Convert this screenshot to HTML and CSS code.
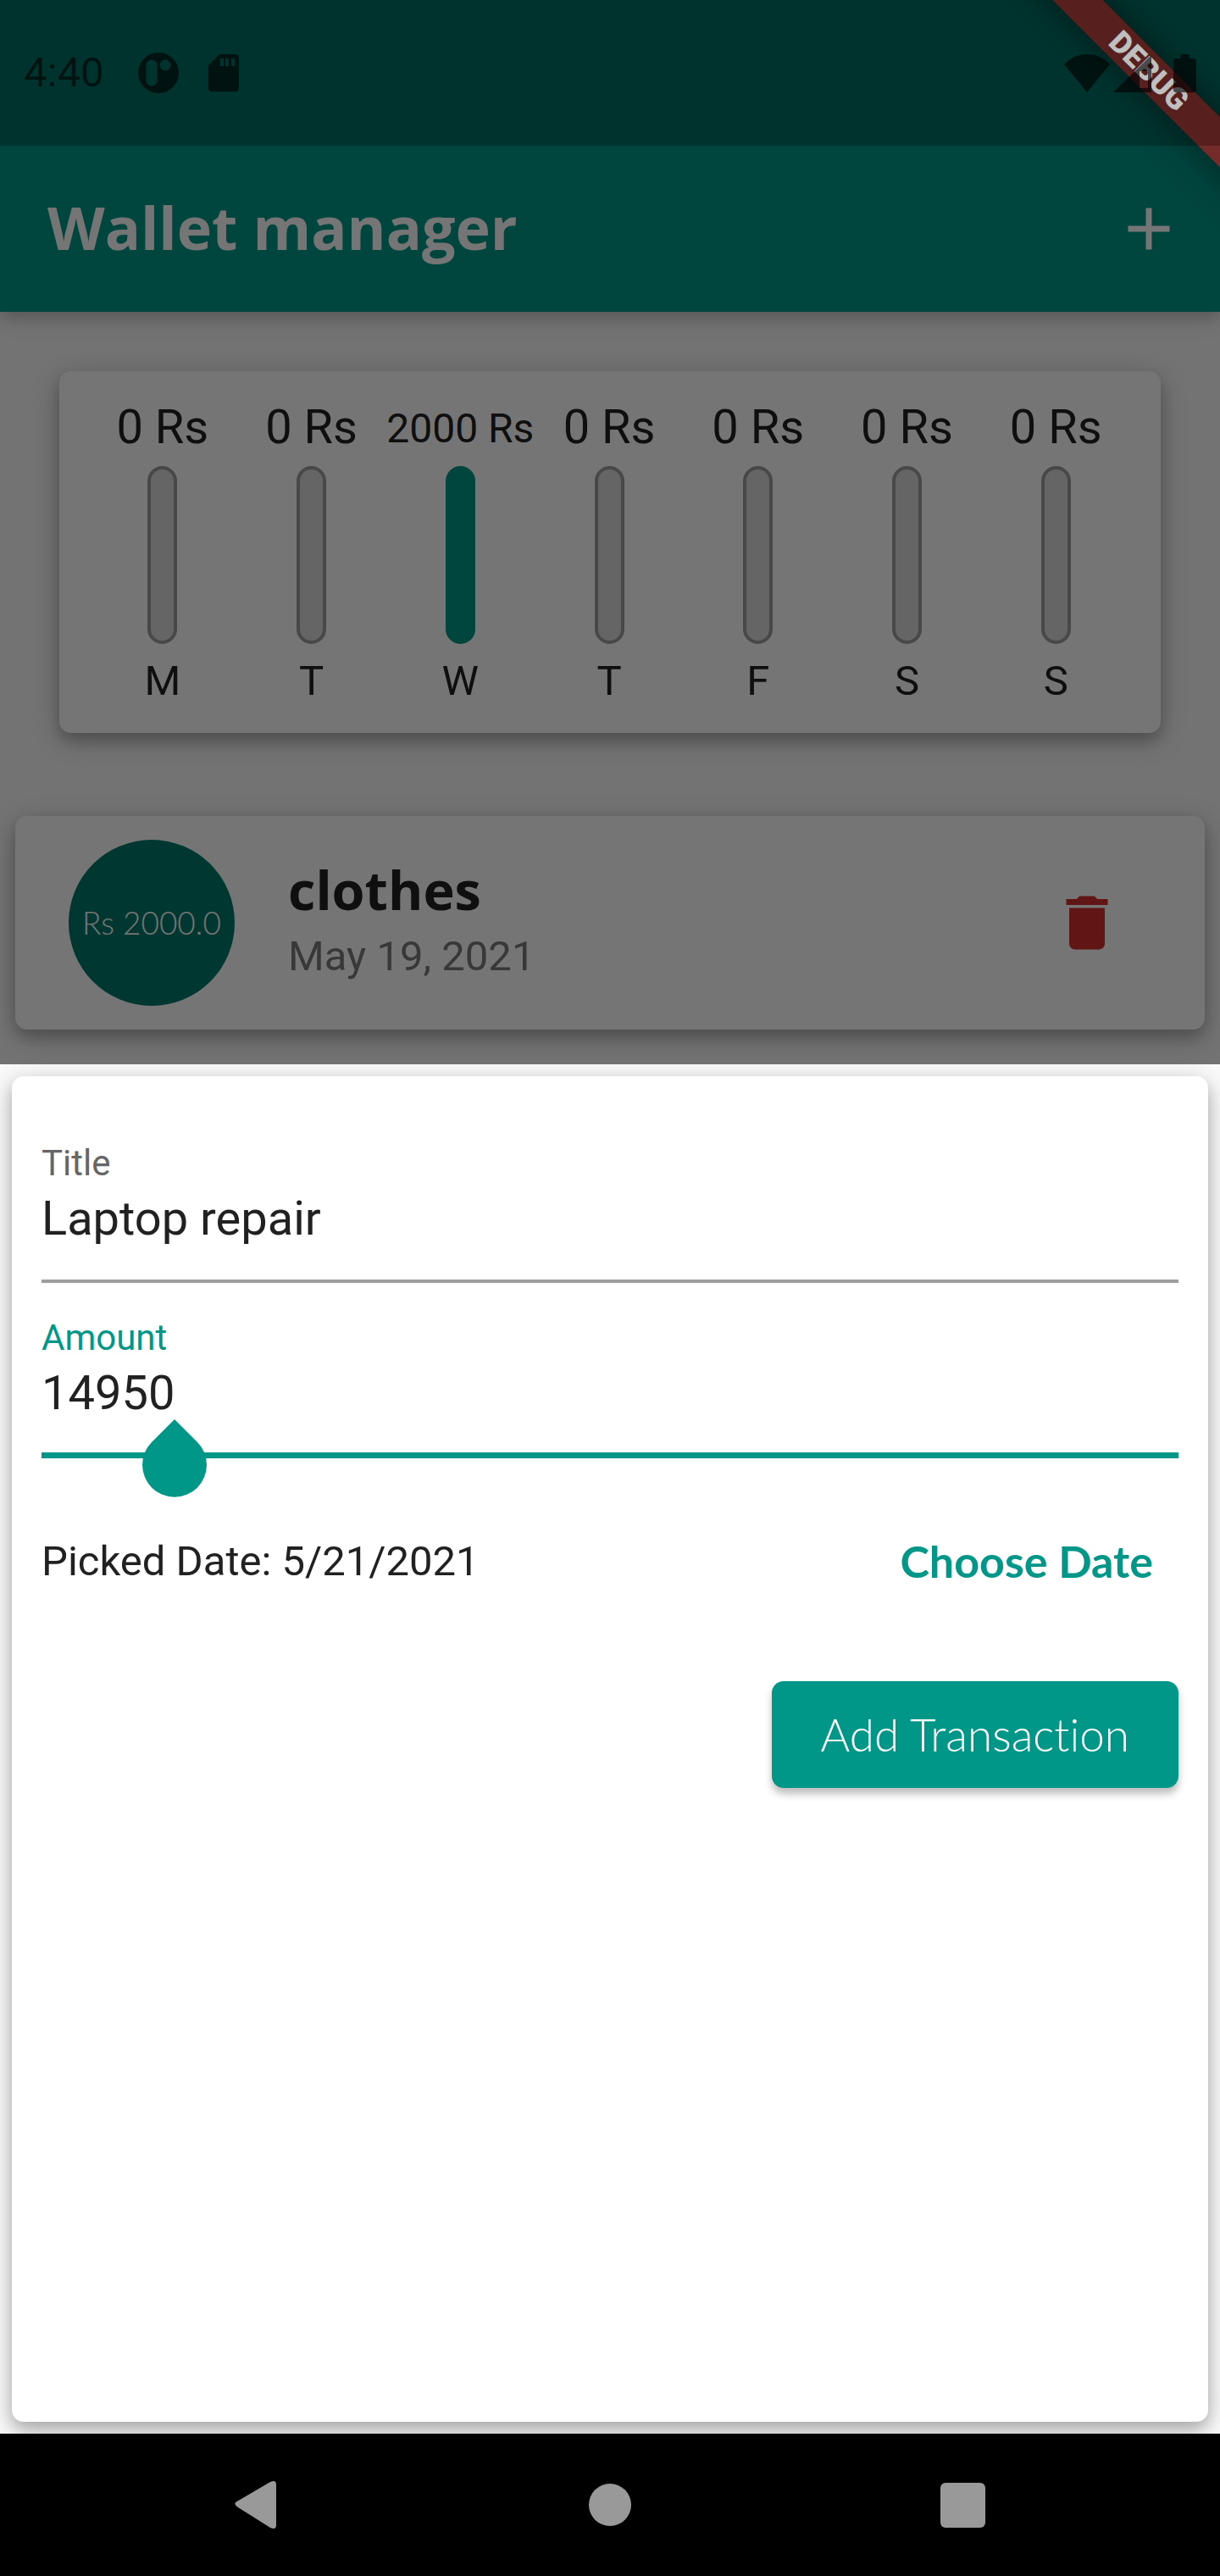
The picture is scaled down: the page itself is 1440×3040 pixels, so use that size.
FILE: index.html
```html
<!DOCTYPE html>
<html lang="en">
<head>
<meta charset="utf-8">
<meta name="viewport" content="width=device-width, initial-scale=1">
<title>Wallet manager</title>
<link rel="stylesheet" href="styles.css">
</head>
<body>
<div class="screen">
  <div class="app">
    <header class="top">
      <div class="status-bar">
        <div class="status-group">
          <span class="clock">4:40</span>
          <svg class="status-icon" viewBox="0 0 50 50" width="50" height="50" aria-hidden="true"><path fill-rule="evenodd" d="M25 1a24 24 0 1 0 0 48a24 24 0 1 0 0-48zM17 9.500a6.500 6.500 0 0 1 6.500 6.500v18a6.500 6.500 0 0 1-13 0V16a6.500 6.500 0 0 1 6.500-6.500zM33 9.500a6.500 6.500 0 1 1 0 13a6.500 6.500 0 1 1 0-13z"/></svg>
          <svg class="status-icon sd-icon" viewBox="0 0 36 44" width="36" height="44" aria-hidden="true"><path fill-rule="evenodd" d="M13 0h19a4 4 0 0 1 4 4v36a4 4 0 0 1-4 4H4a4 4 0 0 1-4-4V13zM14 5v9h4V5zM20 5v9h4V5zM27 5v9h4V5z"/></svg>
        </div>
        <div class="status-group status-right">
          <svg class="status-icon" viewBox="0 0 54 45" width="54" height="45" aria-hidden="true"><path d="M27 45L0 12Q11 0 27 0T54 12z"/></svg>
          <svg class="status-icon" viewBox="0 0 46 45" width="46" height="45" aria-hidden="true"><path fill-rule="evenodd" d="M0 45L45 1V45zM31 20V40H41V20z"/></svg>
          <svg class="status-icon battery" viewBox="0 0 27 45" width="27" height="45" aria-hidden="true"><path d="M8 0h11v5h5a3 3 0 0 1 3 3v34a3 3 0 0 1-3 3H3a3 3 0 0 1-3-3V8a3 3 0 0 1 3-3h5z"/></svg>
        </div>
      </div>
      <div class="app-bar">
        <h1 class="app-title">Wallet manager</h1>
        <button class="icon-button" type="button" aria-label="Add transaction">
          <svg viewBox="0 0 24 24" width="84" height="84" aria-hidden="true"><path fill="#fff" d="M19 13h-6v6h-2v-6H5v-2h6V5h2v6h6v2z"/></svg>
        </button>
      </div>
    </header>
    <main class="content">
      <section class="card chart" aria-label="Spending this week">
        <div class="day"><span class="amount">0 Rs</span><span class="bar"></span><span class="day-name">M</span></div>
        <div class="day"><span class="amount">0 Rs</span><span class="bar"></span><span class="day-name">T</span></div>
        <div class="day"><span class="amount amount-long">2000 Rs</span><span class="bar bar-full"></span><span class="day-name">W</span></div>
        <div class="day"><span class="amount">0 Rs</span><span class="bar"></span><span class="day-name">T</span></div>
        <div class="day"><span class="amount">0 Rs</span><span class="bar"></span><span class="day-name">F</span></div>
        <div class="day"><span class="amount">0 Rs</span><span class="bar"></span><span class="day-name">S</span></div>
        <div class="day"><span class="amount">0 Rs</span><span class="bar"></span><span class="day-name">S</span></div>
      </section>
      <article class="card transaction">
        <div class="badge">Rs 2000.0</div>
        <div class="details">
          <h2 class="name">clothes</h2>
          <p class="date">May 19, 2021</p>
        </div>
        <button class="icon-button" type="button" aria-label="Delete clothes">
          <svg viewBox="0 0 24 24" width="84" height="84" aria-hidden="true"><path fill="#d32f2f" d="M6 19c0 1.100.9 2 2 2h8c1.100 0 2-.9 2-2V7H6v12zM19 4h-3.500l-1-1h-5l-1 1H5v2h14V4z"/></svg>
        </button>
      </article>
    </main>
    <div class="scrim"></div>
  </div>
  <section class="sheet" aria-label="New transaction">
    <form class="card form">
      <div class="field">
        <label class="label" for="title">Title</label>
        <input class="input" id="title" type="text" value="Laptop repair">
      </div>
      <div class="field field-active">
        <label class="label" for="amount">Amount</label>
        <input class="input" id="amount" type="text" inputmode="numeric" value="14950">
        <svg class="handle" viewBox="0 0 78 92" width="78" height="92" aria-hidden="true"><path fill="#009688" d="M39 0L66 27A38 38 0 1 1 12 27z"/></svg>
      </div>
      <div class="date-row">
        <span>Picked Date: 5/21/2021</span>
        <button class="text-button" type="button">Choose Date</button>
      </div>
      <button class="submit" type="button">Add Transaction</button>
    </form>
  </section>
  <nav class="nav-bar" aria-label="System">
    <button class="nav-button" type="button" aria-label="Back"><svg viewBox="0 0 56 56" width="56" height="56"><path fill="#999" d="M4 25L45 1q7-3 7 3v48q0 6-7 3L7 31q-5-3-3-6z"/></svg></button>
    <button class="nav-button" type="button" aria-label="Home"><svg viewBox="0 0 56 56" width="56" height="56"><circle cx="28" cy="28" r="25" fill="#999"/></svg></button>
    <button class="nav-button" type="button" aria-label="Recent apps"><svg viewBox="0 0 56 56" width="56" height="56"><rect x="0" y="2" width="53" height="53" rx="6" fill="#999"/></svg></button>
  </nav>
  <div class="debug"><span class="ribbon">DEBUG</span></div>
</div>
</body>
</html>
```
FILE: styles.css
```css
* { box-sizing: border-box; }

body {
  margin: 0;
  font-family: Roboto, "Liberation Sans", sans-serif;
  font-size: 49px;
  line-height: 56px;
  color: #212121;
}

h1, h2, p { margin: 0; }

button {
  padding: 0;
  border: 0;
  background: none;
  font: inherit;
}

svg { display: block; }

.screen {
  position: relative;
  display: flex;
  flex-direction: column;
  min-height: 100vh;
  overflow: hidden;
}

.card {
  border-radius: 14px;
  background: #fff;
  box-shadow: 0 9px 16px rgba(0, 0, 0, .16), 0 8px 32px rgba(0, 0, 0, .24);
}

/* App behind the sheet */
.app {
  position: relative;
  background: #fafafa;
}

.top {
  background: #009688;
  box-shadow: 0 7px 14px rgba(0, 0, 0, .12), 0 10px 24px rgba(0, 0, 0, .12);
}

.status-bar {
  position: relative;
  z-index: 3;
  display: flex;
  align-items: center;
  justify-content: space-between;
  height: 172px;
  padding: 0 28px;
  background: rgba(0, 0, 0, .25);
  color: rgba(0, 0, 0, .62);
}

.status-group {
  display: flex;
  align-items: center;
  gap: 34px;
}

.clock {
  margin-right: 6px;
  line-height: 60px;
}

.status-right { gap: 4px; }

.battery { margin-left: 21px; }

.status-icon { fill: rgba(0, 0, 0, .62); }

.app-bar {
  display: flex;
  align-items: center;
  justify-content: space-between;
  height: 196px;
  padding: 0 42px 0 56px;
}

.app-title {
  padding-bottom: 4px;
  font: 700 70px/96px "Open Sans", sans-serif;
  color: #fff;
}

.content {
  display: flex;
  flex-direction: column;
  gap: 98px;
  padding: 70px 18px 41px;
}

.chart {
  display: flex;
  margin: 0 52px;
  padding: 35px 36px 33px 34px;
}

.day {
  display: flex;
  flex: 1 1 0;
  flex-direction: column;
  align-items: center;
  min-width: 0;
}

.amount {
  height: 63px;
  font-size: 56px;
  line-height: 63px;
  white-space: nowrap;
}

.amount-long {
  font-size: 48px;
  line-height: 66px;
}

.bar {
  width: 35px;
  height: 210px;
  margin: 14px 0 16px;
  border: 4px solid #9e9e9e;
  border-radius: 18px;
  background: #dcdcdc;
}

.bar-full {
  border-color: #009688;
  background: #009688;
}

.transaction {
  display: flex;
  align-items: center;
  gap: 63px;
  padding: 28px 97px 28px 63px;
}

.badge {
  display: flex;
  align-items: center;
  justify-content: center;
  width: 196px;
  height: 196px;
  border-radius: 50%;
  background: #00796b;
  color: #fff;
  font: 300 37px/48px Lato, sans-serif;
}

.details {
  display: flex;
  flex: 1;
  flex-direction: column;
  gap: 9px;
  padding-bottom: 14px;
}

.name { font: 700 63px/84px "Open Sans", sans-serif; }

.date { color: #7a7a7a; }

.scrim {
  position: absolute;
  inset: 0;
  z-index: 1;
  background: rgba(0, 0, 0, .54);
}

/* Bottom sheet */
.sheet {
  position: relative;
  display: flex;
  flex: 1;
  flex-direction: column;
  padding: 14px;
  background: #fafafa;
}

.form {
  display: flex;
  flex: 1;
  flex-direction: column;
  padding: 78px 35px 35px;
}

.field {
  position: relative;
  display: flex;
  flex-direction: column;
  height: 166px;
  border-bottom: 4px solid #9e9e9e;
}

.field-active {
  height: 207px;
  padding-top: 40px;
  border-bottom: 7px solid #009688;
}

.label {
  font-size: 42px;
  line-height: 49px;
  color: #666;
}

.field-active .label { color: #009688; }

.input {
  width: 100%;
  height: 66px;
  margin-top: 8px;
  padding: 0;
  border: 0;
  outline: 0;
  background: none;
  font: 56px/66px Roboto, sans-serif;
  color: #212121;
}

.handle {
  position: absolute;
  left: 118px;
  bottom: -53px;
}

.date-row {
  display: flex;
  align-items: center;
  justify-content: space-between;
  height: 243px;
  padding-right: 30px;
}

.text-button {
  padding-bottom: 2px;
  color: #009688;
  font: 700 52px/56px Lato, sans-serif;
}

.submit {
  align-self: flex-end;
  height: 126px;
  margin-top: 20px;
  padding: 0 58px;
  border-radius: 14px;
  background: #009688;
  box-shadow: 0 7px 10px rgba(0, 0, 0, .26);
  color: #fff;
  font: 300 53px/56px Lato, sans-serif;
  font-variant-ligatures: none;
}

/* System navigation */
.nav-bar {
  position: relative;
  display: flex;
  align-items: center;
  justify-content: space-between;
  height: 168px;
  padding: 0 19%;
  background: #000;
}

.nav-button {
  display: flex;
  flex: 0 0 56px;
}

/* Corner ribbon */
.debug {
  position: absolute;
  top: 0;
  right: 0;
  z-index: 2;
  width: 300px;
  height: 300px;
  overflow: hidden;
}

.ribbon {
  position: absolute;
  top: 63px;
  right: -116px;
  width: 400px;
  height: 42px;
  transform: rotate(45deg);
  background: rgba(183, 28, 28, .63);
  box-shadow: 0 0 42px rgba(0, 0, 0, .5);
  color: #fff;
  font-size: 36px;
  font-weight: 900;
  line-height: 42px;
  text-align: center;
}
```
